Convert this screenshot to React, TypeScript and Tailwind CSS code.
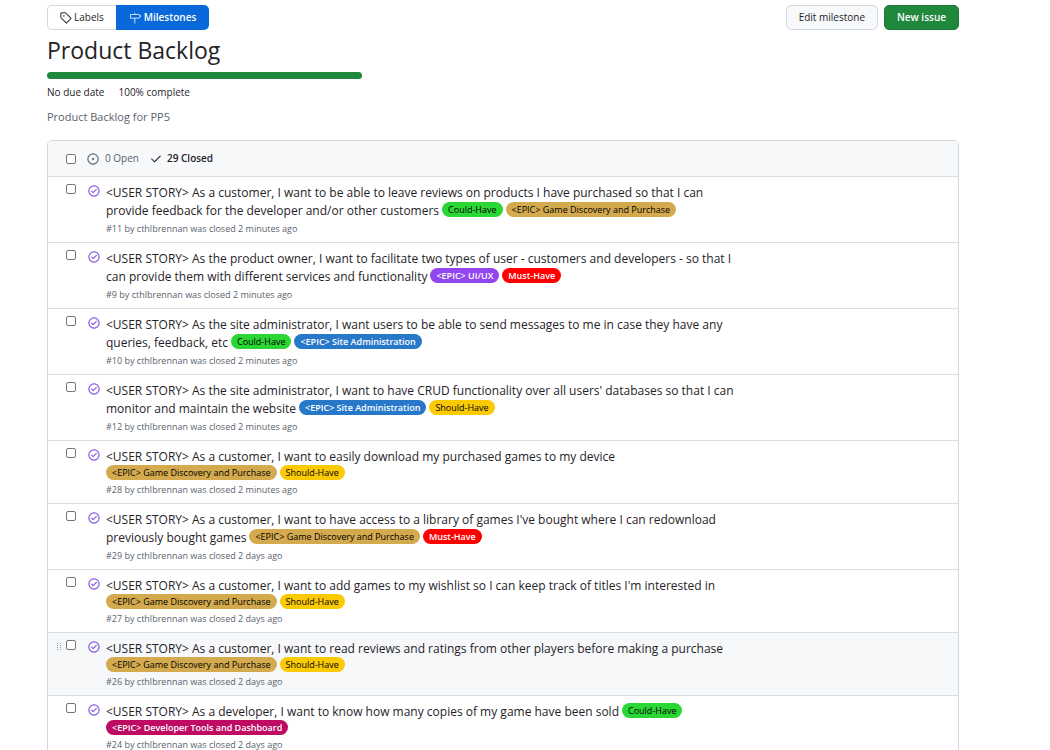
import { Fragment } from "react";
import { GoCheck, GoCheckCircle, GoIssueOpened, GoMilestone, GoTag } from "react-icons/go";

type LabelKind = "could" | "should" | "must" | "discovery" | "uiux" | "admin" | "devtools";

const labels: Record<LabelKind, { text: string; className: string }> = {
  could: { text: "Could-Have", className: "bg-[#2bd734] text-black font-medium" },
  should: { text: "Should-Have", className: "bg-[#fbca04] text-black font-medium" },
  must: { text: "Must-Have", className: "bg-[#ff0000] text-white font-semibold" },
  discovery: { text: "<EPIC> Game Discovery and Purchase", className: "bg-[#d4aa4f] text-black font-medium" },
  uiux: { text: "<EPIC> UI/UX", className: "bg-[#9146f0] text-white font-semibold" },
  admin: { text: "<EPIC> Site Administration", className: "bg-[#2778c9] text-white font-semibold" },
  devtools: { text: "<EPIC> Developer Tools and Dashboard", className: "bg-[#be0a62] text-white font-semibold" },
};

interface Issue {
  number: number;
  title: string[];
  inline: LabelKind[];
  below?: LabelKind[];
  closed: string;
  active?: boolean;
}

const issues: Issue[] = [
  {
    number: 11,
    title: [
      "<USER STORY> As a customer, I want to be able to leave reviews on products I have purchased so that I can",
      "provide feedback for the developer and/or other customers",
    ],
    inline: ["could", "discovery"],
    closed: "2 minutes ago",
  },
  {
    number: 9,
    title: [
      "<USER STORY> As the product owner, I want to facilitate two types of user - customers and developers - so that I",
      "can provide them with different services and functionality",
    ],
    inline: ["uiux", "must"],
    closed: "2 minutes ago",
  },
  {
    number: 10,
    title: [
      "<USER STORY> As the site administrator, I want users to be able to send messages to me in case they have any",
      "queries, feedback, etc",
    ],
    inline: ["could", "admin"],
    closed: "2 minutes ago",
  },
  {
    number: 12,
    title: [
      "<USER STORY> As the site administrator, I want to have CRUD functionality over all users' databases so that I can",
      "monitor and maintain the website",
    ],
    inline: ["admin", "should"],
    closed: "2 minutes ago",
  },
  {
    number: 28,
    title: ["<USER STORY> As a customer, I want to easily download my purchased games to my device"],
    inline: [],
    below: ["discovery", "should"],
    closed: "2 minutes ago",
  },
  {
    number: 29,
    title: [
      "<USER STORY> As a customer, I want to have access to a library of games I've bought where I can redownload",
      "previously bought games",
    ],
    inline: ["discovery", "must"],
    closed: "2 days ago",
  },
  {
    number: 27,
    title: ["<USER STORY> As a customer, I want to add games to my wishlist so I can keep track of titles I'm interested in"],
    inline: [],
    below: ["discovery", "should"],
    closed: "2 days ago",
  },
  {
    number: 26,
    title: ["<USER STORY> As a customer, I want to read reviews and ratings from other players before making a purchase"],
    inline: [],
    below: ["discovery", "should"],
    closed: "2 days ago",
    active: true,
  },
  {
    number: 24,
    title: ["<USER STORY> As a developer, I want to know how many copies of my game have been sold"],
    inline: ["could"],
    below: ["devtools"],
    closed: "2 days ago",
  },
];

function Pill({ kind }: { kind: LabelKind }) {
  const { text, className } = labels[kind];
  return (
    <a href="#label" className={`block h-[15px] shrink-0 rounded-full px-[6px] text-[9px] leading-[15px] whitespace-nowrap ${className}`}>
      {text}
    </a>
  );
}

function DragHandle() {
  return (
    <svg viewBox="0 0 4 8" className="h-2 w-1" fill="#8b949e" aria-hidden="true">
      <path d="M0 0h1v1H0zM3 0h1v1H3zM0 2h1v1H0zM3 2h1v1H3zM0 4h1v1H0zM3 4h1v1H3zM0 6h1v1H0zM3 6h1v1H3z" />
    </svg>
  );
}

const checkbox = "block size-[10px] shrink-0 appearance-none rounded-[2px] border border-[#767676] bg-white checked:bg-[#0969da]";

function IssueRow({ issue }: { issue: Issue }) {
  const last = issue.title.length - 1;
  return (
    <li className={`flex border-t border-[#d8dee4] pt-[7px] pb-[6px] ${issue.active ? "bg-[#f6f8fa]" : "bg-white"}`}>
      <div className="flex w-[18px] shrink-0 justify-end pt-[3px] pr-[5px]">
        {issue.active && <DragHandle />}
      </div>
      <input type="checkbox" aria-label={`Select issue #${issue.number}`} className={checkbox} />
      <GoCheckCircle className="mt-px ml-[12px] size-3 shrink-0 text-[#8250df]" strokeWidth={0.6} />
      <div className="ml-[6px] min-w-0 flex-1">
        <div className="text-[12px] leading-[18px] whitespace-nowrap">
          {issue.title.map((line, i) => (
            <Fragment key={line}>
              {i === last ? (
                <div className="flex items-start gap-[3px]">
                  <a href="#issue">{line}</a>
                  {issue.inline.map((kind) => (
                    <Pill key={kind} kind={kind} />
                  ))}
                </div>
              ) : (
                <a href="#issue" className="block">
                  {line}
                </a>
              )}
            </Fragment>
          ))}
        </div>
        {issue.below && (
          <div className="-mt-px flex gap-[3px] pb-px">
            {issue.below.map((kind) => (
              <Pill key={kind} kind={kind} />
            ))}
          </div>
        )}
        <p className="mt-[2px] text-[9px] leading-[14px] text-[#59636e]">
          #{issue.number} by <a href="#author">cthlbrennan</a> was closed {issue.closed}
        </p>
      </div>
    </li>
  );
}

export default function App() {
  return (
    <main className="bg-white pt-[5px] pr-[91px] pl-[47px] font-['Open_Sans',sans-serif] text-[#1f2328]">
      <div className="flex h-[25px] justify-between text-[10px]">
        <nav className="flex" aria-label="Issue sections">
          <a href="#labels" className="flex items-center gap-[2px] rounded-l-[5px] border border-r-0 border-[#d0d7de] px-3">
            <GoTag className="size-3" strokeWidth={0.4} />
            Labels
          </a>
          <a href="#milestones" className="flex items-center gap-[3px] rounded-r-[5px] bg-[#0969da] px-[13px] font-semibold text-white">
            <GoMilestone className="size-3" />
            Milestones
          </a>
        </nav>
        <div className="flex gap-[6px]">
          <button type="button" className="rounded-[5px] border border-[#d0d7de] bg-[#f6f8fa] px-3">
            Edit milestone
          </button>
          <button type="button" className="rounded-[5px] border border-[#1c7a38] bg-[#1f883d] px-3 font-semibold text-white">
            New issue
          </button>
        </div>
      </div>

      <h1 className="mt-[2px] text-[23px] leading-9">Product Backlog</h1>
      <div className="mt-1 h-[7px] w-[315px] rounded-full bg-[#1f883d]" role="progressbar" aria-valuenow={100} aria-label="Milestone progress" />
      <div className="mt-[5px] flex gap-[14px] text-[10px] leading-4">
        <span>No due date</span>
        <span>100% complete</span>
      </div>
      <p className="mt-[8px] text-[11px] leading-[18px] text-[#59636e]">Product Backlog for PP5</p>

      <section className="mt-[14px] overflow-hidden rounded-t-[5px] border border-[#d0d7de]">
        <div className="flex h-[35px] items-center bg-[#f6f8fa] pl-[18px] text-[10px]">
          <input type="checkbox" aria-label="Select all issues" className={checkbox} />
          <a href="#open" className="ml-[11px] flex items-center gap-[6px] text-[#59636e]">
            <GoIssueOpened className="size-3" strokeWidth={0.6} />
            0 Open
          </a>
          <a href="#closed" className="ml-[11px] flex items-center gap-[5px] font-semibold">
            <GoCheck className="size-3" strokeWidth={0.6} />
            29 Closed
          </a>
        </div>
        <ul>
          {issues.map((issue) => (
            <IssueRow key={issue.number} issue={issue} />
          ))}
        </ul>
      </section>
    </main>
  );
}
